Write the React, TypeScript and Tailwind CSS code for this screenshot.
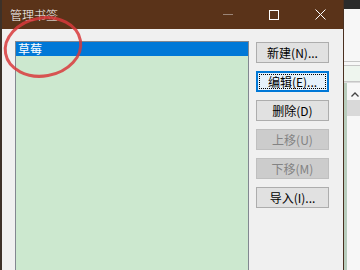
import { ReactNode } from "react";

const FONT = {
  fontFamily: '"Microsoft YaHei", "Noto Sans CJK SC", "Noto Sans", sans-serif',
};

function DlgButton({
  children,
  focused,
  disabled,
}: {
  children: ReactNode;
  focused?: boolean;
  disabled?: boolean;
}) {
  if (focused) {
    return (
      <div className="flex h-[21px] w-[73px] items-center justify-center border-2 border-[#0078d7] bg-[#e5f1fb] p-px">
        <div className="flex h-full w-full items-center justify-center border border-dotted border-black text-[12px] leading-none text-black">
          {children}
        </div>
      </div>
    );
  }
  return (
    <div
      className={
        disabled
          ? "flex h-[21px] w-[73px] items-center justify-center border border-[#bfbfbf] bg-[#cccccc] text-[12px] leading-none text-[#838383]"
          : "flex h-[21px] w-[73px] items-center justify-center border border-[#adadad] bg-[#e1e1e1] text-[12px] leading-none text-black"
      }
    >
      {children}
    </div>
  );
}

export default function App() {
  return (
    <div
      className="relative flex h-[270px] w-[360px] overflow-hidden bg-[#f0f0f0]"
      style={FONT}
    >
      {/* dialog */}
      <div className="flex h-full w-[344px] flex-col border-l-2 border-r border-l-[#3d3128] border-r-[#4a3020]">
        <div className="flex h-[29px] shrink-0 items-center bg-[#5a3319] pl-[8px] text-white">
          <span className="text-[12px] font-light">管理书签</span>
          <div className="ml-auto flex h-full items-center">
            <div className="flex w-[46px] justify-center">
              <div className="h-px w-[10px] bg-[#9b8577]" />
            </div>
            <div className="flex w-[46px] justify-center">
              <div className="h-[10px] w-[10px] border border-white" />
            </div>
            <div className="flex w-[46px] justify-center">
              <svg width="11" height="11" viewBox="0 0 11 11">
                <path d="M0.5 0.5 L10.5 10.5 M10.5 0.5 L0.5 10.5" stroke="white" strokeWidth="1" />
              </svg>
            </div>
          </div>
        </div>
        <div className="flex min-h-0 flex-1 gap-[7px] pl-[13px] pt-[12px]">
          <div className="h-[260px] w-[234px] shrink-0 border border-[#828790] bg-[#cce8cf]">
            <div className="flex h-[14px] items-center bg-[#0078d7] pl-[2px] text-[12px] leading-none text-white">
              草莓
            </div>
          </div>
          <div className="flex flex-col gap-[8px] pt-px">
            <DlgButton>新建(N)...</DlgButton>
            <DlgButton focused>编辑(E)...</DlgButton>
            <DlgButton>删除(D)</DlgButton>
            <DlgButton disabled>上移(U)</DlgButton>
            <DlgButton disabled>下移(M)</DlgButton>
            <DlgButton>导入(I)...</DlgButton>
          </div>
        </div>
      </div>

      {/* window behind */}
      <div className="flex flex-1 flex-col bg-[#f7f7f7]">
        <div className="h-[9px] bg-[#2b2b2b]" />
        <div className="h-[52px]" />
        <div className="h-px bg-[#c6c6c6]" />
        <div className="h-[3px]" />
        <div className="h-px bg-[#c6c6c6]" />
        <div className="h-[15px] bg-[#eef5ee]" />
        <div className="h-px bg-[#c6c6c6]" />
        <div className="h-px bg-[#dcdcdc]" />
        <div className="flex flex-1">
          <div className="w-[3px] bg-[#b9cdbd]" />
          <div className="flex flex-1 flex-col">
            <div className="flex h-[17px] items-center justify-center pl-[3px] pt-[6px]">
              <svg width="8" height="5" viewBox="0 0 8 5">
                <path d="M0.5 4.5 L4 1 L7.5 4.5" stroke="#444" strokeWidth="1.3" fill="none" />
              </svg>
            </div>
            <div className="h-[16px] bg-[#d9d9d9]" />
          </div>
        </div>
      </div>

      {/* red annotation circle */}
      <svg
        className="pointer-events-none absolute left-0 top-0"
        width="100"
        height="90"
        viewBox="0 0 100 90"
      >
        <ellipse
          cx="43"
          cy="47"
          rx="38"
          ry="29"
          transform="rotate(-10 43 47)"
          fill="none"
          stroke="#d8393c"
          strokeOpacity="0.85"
          strokeWidth="3"
        />
      </svg>
    </div>
  );
}
